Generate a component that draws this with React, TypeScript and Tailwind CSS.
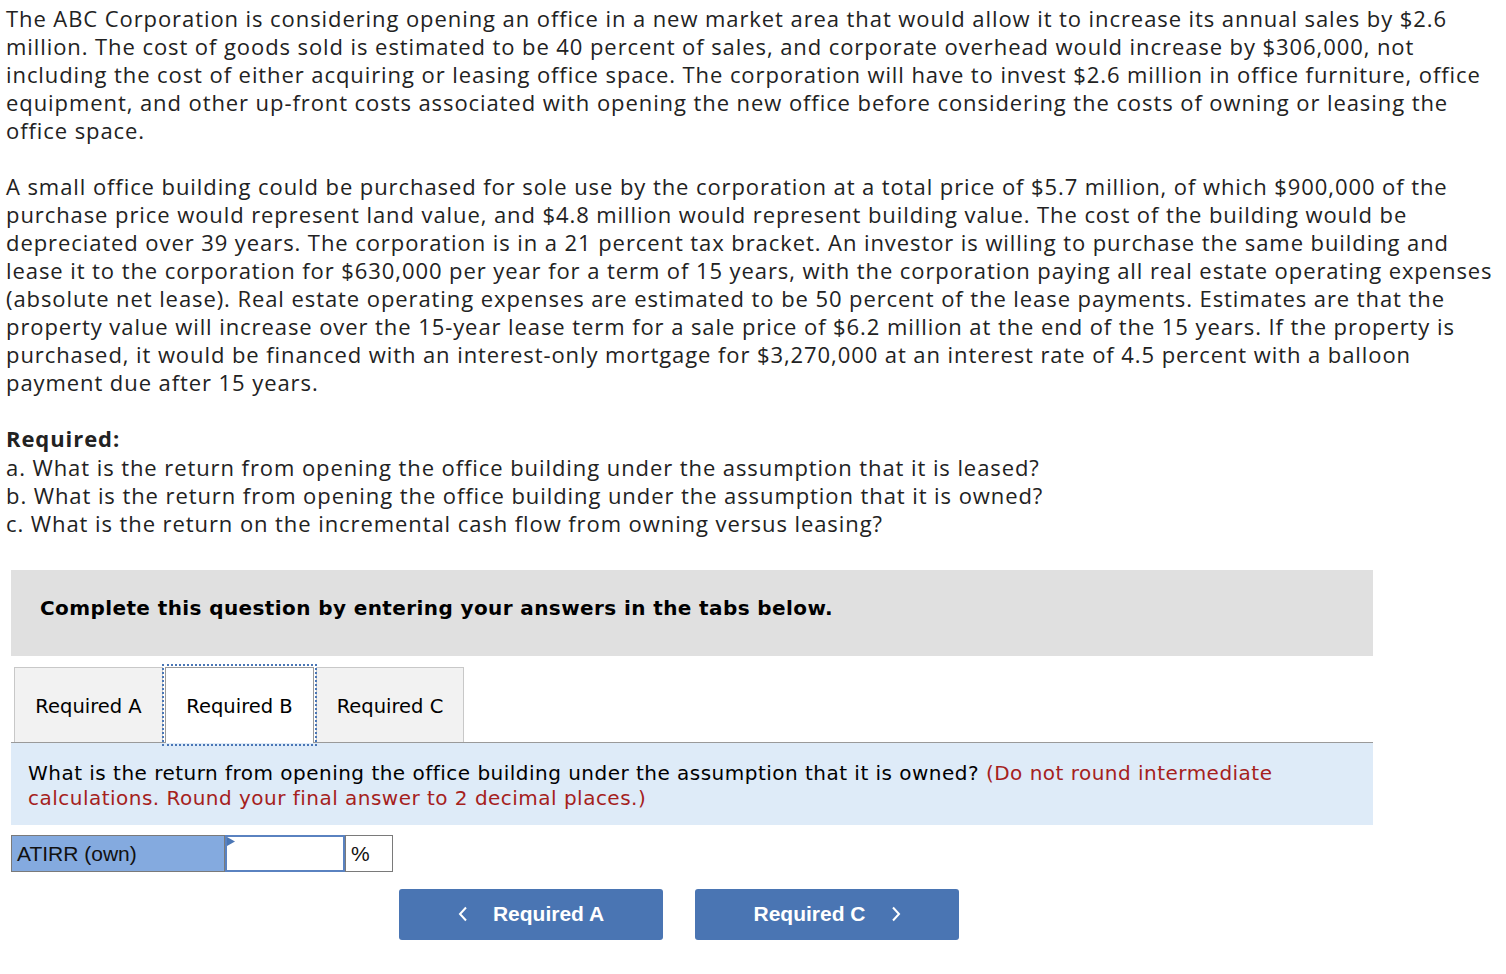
import React from "react";

const body = "font-['Open_Sans',sans-serif]";

function Lines({ lines }: { lines: string[] }) {
  return (
    <div>
      {lines.map((l, i) => (
        <div key={i} className="whitespace-nowrap h-[28px] leading-[28px]">
          {l}
        </div>
      ))}
    </div>
  );
}

export default function App() {
  return (
    <div className={`bg-white min-h-[974px] w-[1506px] pt-[4px] pl-[6px] text-[22px] tracking-[0.92px] text-[#222] ${body}`}>
      <Lines
        lines={[
          "The ABC Corporation is considering opening an office in a new market area that would allow it to increase its annual sales by $2.6",
          "million. The cost of goods sold is estimated to be 40 percent of sales, and corporate overhead would increase by $306,000, not",
          "including the cost of either acquiring or leasing office space. The corporation will have to invest $2.6 million in office furniture, office",
          "equipment, and other up-front costs associated with opening the new office before considering the costs of owning or leasing the",
          "office space.",
        ]}
      />
      <div className="mt-[28px]">
        <Lines
          lines={[
            "A small office building could be purchased for sole use by the corporation at a total price of $5.7 million, of which $900,000 of the",
            "purchase price would represent land value, and $4.8 million would represent building value. The cost of the building would be",
            "depreciated over 39 years. The corporation is in a 21 percent tax bracket. An investor is willing to purchase the same building and",
            "lease it to the corporation for $630,000 per year for a term of 15 years, with the corporation paying all real estate operating expenses",
            "(absolute net lease). Real estate operating expenses are estimated to be 50 percent of the lease payments. Estimates are that the",
            "property value will increase over the 15-year lease term for a sale price of $6.2 million at the end of the 15 years. If the property is",
            "purchased, it would be financed with an interest-only mortgage for $3,270,000 at an interest rate of 4.5 percent with a balloon",
            "payment due after 15 years.",
          ]}
        />
      </div>
      <div className="mt-[28px]">
        <div className="h-[28px] leading-[28px] font-bold">Required:</div>
        <div className="mt-[1px]">
          <Lines
            lines={[
              "a. What is the return from opening the office building under the assumption that it is leased?",
              "b. What is the return from opening the office building under the assumption that it is owned?",
              "c. What is the return on the incremental cash flow from owning versus leasing?",
            ]}
          />
        </div>
      </div>

      <div className="ml-[5px] w-[1362px] mt-[33px] tracking-normal font-['DejaVu_Sans','Verdana',sans-serif]">
        <div className="h-[86px] bg-[#e0e0e0] flex items-center pl-[29px] pb-[10px] text-[20px] tracking-[0.4px] font-bold text-black">
          Complete this question by entering your answers in the tabs below.
        </div>

        <div className="mt-[11px] flex pl-[3px] border-b border-[#9a9a9a] text-[19.5px] text-black">
          <div className="w-[149px] h-[75px] pt-[3px] bg-[#f2f2f2] border border-b-0 border-[#c8c8c8] flex items-center justify-center">
            Required A
          </div>
          <div className="relative z-10 ml-[2px] w-[149px] h-[76px] pt-[3px] -mb-[1px] bg-white border border-b-0 border-[#9a9a9a] outline-2 outline-dotted outline-offset-[1px] outline-[#4a76b5] flex items-center justify-center">
            Required B
          </div>
          <div className="ml-[2px] w-[148px] h-[75px] pt-[3px] bg-[#f2f2f2] border border-b-0 border-[#c8c8c8] flex items-center justify-center">
            Required C
          </div>
        </div>

        <div className="h-[82px] bg-[#deebf8] pl-[17px] pt-[18px] text-[20px] tracking-[0.48px] leading-[25px] text-black">
          <div className="whitespace-nowrap">
            What is the return from opening the office building under the assumption that it is owned?{" "}
            <span className="text-[#a5211c]">(Do not round intermediate</span>
          </div>
          <div className="whitespace-nowrap text-[#a5211c]">calculations. Round your final answer to 2 decimal places.)</div>
        </div>

        <div className="mt-[10px] flex h-[37px] font-['Liberation_Sans','Arial',sans-serif] text-[21px] text-[#111]">
          <div className="w-[214px] bg-[#84aadf] border border-[#7a7a7a] flex items-center pl-[5px]">ATIRR (own)</div>
          <div className="relative w-[120px] bg-white border-2 border-[#5a82c0]">
            <svg className="absolute left-0 top-0" width="8" height="9" viewBox="0 0 8 9">
              <polygon points="0,0 8,4.5 0,9" fill="#4a76b5" />
            </svg>
          </div>
          <div className="w-[48px] bg-white border border-[#7a7a7a] flex items-center pl-[5px]">%</div>
        </div>

        <div className="mt-[17px] ml-[388px] flex gap-[32px] font-['Liberation_Sans','Arial',sans-serif]">
          <div className="w-[264px] h-[51px] pb-[1px] rounded-[3px] bg-[#4a75b3] text-white flex items-center justify-center gap-[25px] text-[21px] font-bold">
            <svg width="10" height="16" viewBox="0 0 10 16">
              <polyline points="8,1.5 2,8 8,14.5" fill="none" stroke="white" strokeWidth="2" />
            </svg>
            <span>Required A</span>
          </div>
          <div className="w-[264px] h-[51px] pb-[1px] rounded-[3px] bg-[#4a75b3] text-white flex items-center justify-center gap-[25px] text-[21px] font-bold">
            <span>Required C</span>
            <svg width="10" height="16" viewBox="0 0 10 16">
              <polyline points="2,1.5 8,8 2,14.5" fill="none" stroke="white" strokeWidth="2" />
            </svg>
          </div>
        </div>
      </div>
    </div>
  );
}
